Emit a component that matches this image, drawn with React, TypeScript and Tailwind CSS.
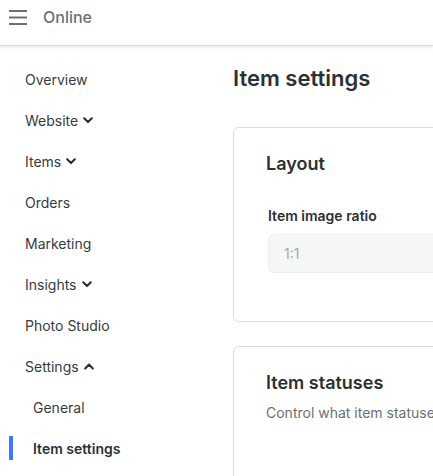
import { useState } from 'react';

const navItems: { label: string; chevron?: 'down' | 'up' }[] = [
  { label: 'Overview' },
  { label: 'Website', chevron: 'down' },
  { label: 'Items', chevron: 'down' },
  { label: 'Orders' },
  { label: 'Marketing' },
  { label: 'Insights', chevron: 'down' },
  { label: 'Photo Studio' },
  { label: 'Settings', chevron: 'up' },
];

const subItems = ['General', 'Item settings'];

function Chevron({ dir }: { dir: 'down' | 'up' }) {
  return (
    <svg className="w-[10px] h-[7px] ml-[5px] text-[#2b3035]" viewBox="0 0 10 7" fill="none">
      {dir === 'down' ? (
        <path d="M1.2 1.3L5 5.1l3.8-3.8" stroke="currentColor" strokeWidth={2.1} strokeLinecap="round" strokeLinejoin="round" />
      ) : (
        <path d="M1.2 5.4L5 1.6l3.8 3.8" stroke="currentColor" strokeWidth={2.1} strokeLinecap="round" strokeLinejoin="round" />
      )}
    </svg>
  );
}

export default function App() {
  const [active] = useState('Item settings');

  return (
    <div className="h-screen w-full overflow-hidden bg-white font-['Inter',sans-serif] text-[#373b40]">
      {/* Header */}
      <header className="h-[46px] flex items-start pt-[7px] border-b border-[#dcdcdc] shadow-[0_1px_3px_rgba(0,0,0,0.12)] relative z-10">
        <svg className="ml-[9px] mt-[2px] w-[18px] h-[16px] text-[#6c7075]" viewBox="0 0 18 16" fill="none">
          <path d="M0 2h18M0 8.5h18M0 15h18" stroke="currentColor" strokeWidth={2} />
        </svg>
        <span className="ml-[16px] text-[16px] leading-[20px] font-medium text-[#6c7075]">Online</span>
      </header>

      <div className="flex">
        {/* Sidebar */}
        <nav className="w-[209px] shrink-0 pt-[13px]">
          {navItems.map((item) => (
            <div key={item.label} className="h-[41px] flex items-center pl-[25px] text-[14px]">
              <span>{item.label}</span>
              {item.chevron && <Chevron dir={item.chevron} />}
            </div>
          ))}
          {subItems.map((label) => (
            <div key={label} className="h-[41px] flex items-center relative pl-[33px] text-[14px]">
              {label === active && (
                <span className="absolute left-[9px] top-[8px] h-[24px] w-[4px] bg-[#3d78f7]" />
              )}
              <span className={label === active ? 'font-semibold text-[#2b3035]' : ''}>{label}</span>
            </div>
          ))}
        </nav>

        {/* Main */}
        <main className="flex-1 pl-[24px] pt-[17px] min-w-0">
          <h1 className="text-[22px] leading-[30px] font-semibold text-[#2b3035]">Item settings</h1>

          <section className="mt-[34px] w-[600px] border border-[#dcdcdc] rounded-[6px] pt-[24px] pb-[48px] pl-[32px]">
            <h2 className="text-[18px] leading-[24px] font-semibold text-[#2b3035]">Layout</h2>
            <label className="block mt-[30px] text-[14px] leading-[20px] font-semibold text-[#2b3035] pl-[2px]">
              Item image ratio
            </label>
            <div className="mt-[8px] ml-[2px] h-[39px] bg-[#f5f6f6] border border-[#eceeee] rounded-[6px] flex items-center pl-[15px] text-[14px] text-[#a8abad]">
              1:1
            </div>
          </section>

          <section className="mt-[24px] w-[600px] h-[200px] border border-[#dcdcdc] rounded-[6px] pt-[24px] pl-[32px]">
            <h2 className="text-[18px] leading-[24px] font-semibold text-[#2b3035]">Item statuses</h2>
            <p className="mt-[8px] text-[14px] leading-[20px] text-[#6c7075]">
              Control what item statuses
            </p>
          </section>
        </main>
      </div>
    </div>
  );
}
